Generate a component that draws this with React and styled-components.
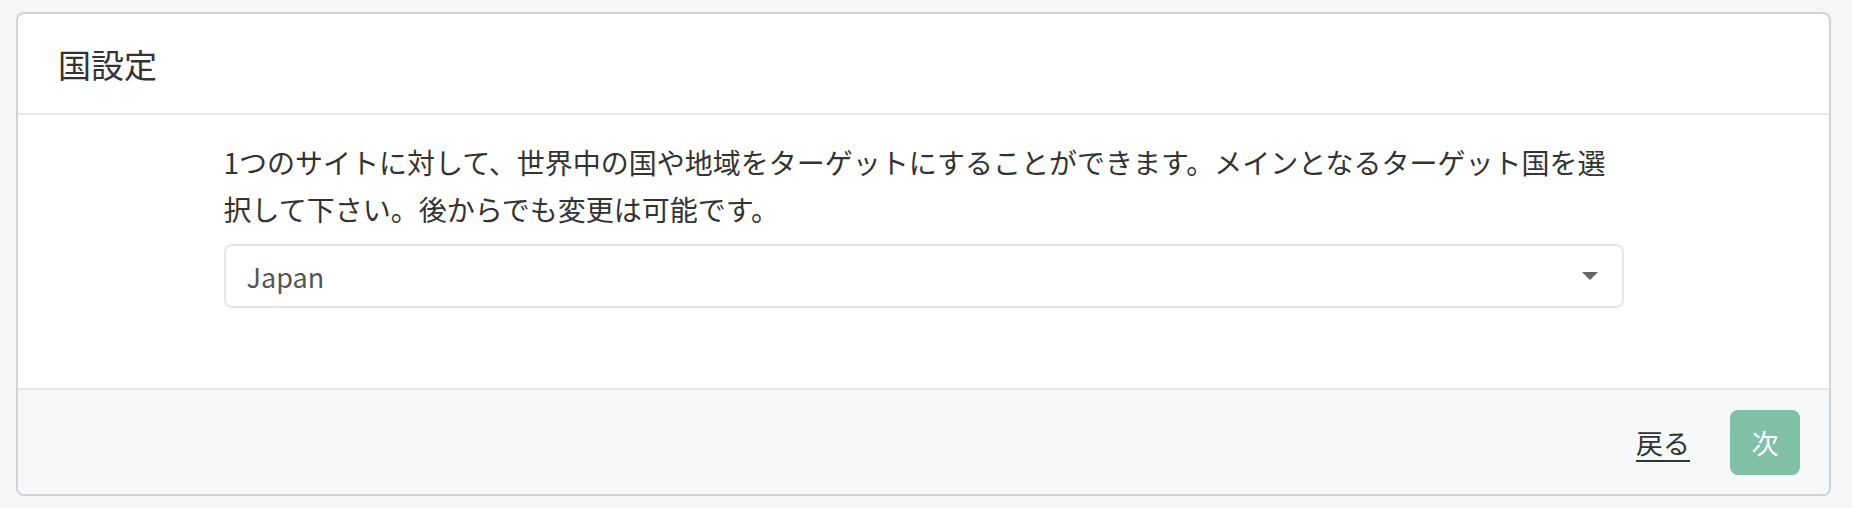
import React from "react";
import styled, { createGlobalStyle } from "styled-components";

const GlobalStyle = createGlobalStyle`
  html, body {
    margin: 0;
    padding: 0;
    background: #f6f6f6;
    font-family: "Noto Sans CJK JP", "Noto Sans", sans-serif;
    color: #333;
  }
  * { box-sizing: border-box; }
`;

const Page = styled.div`
  padding: 12px 21px 12px 16px;
`;

const Card = styled.section`
  background: #fff;
  border: 2px solid #d0d4d9;
  border-radius: 8px;
  overflow: hidden;
`;

const Header = styled.header`
  height: 101px;
  display: flex;
  align-items: center;
  padding: 0 40px;
  border-bottom: 2px solid #e8e8e8;
`;

const Title = styled.h2`
  margin: 0;
  font-size: 33px;
  font-weight: 400;
  color: #333;
`;

const Body = styled.div`
  height: 275px;
  padding: 24px 0 0;
  display: flex;
  justify-content: center;
  border-bottom: 2px solid #e6e6e6;
`;

const Column = styled.div`
  width: 1400px;
  display: flex;
  flex-direction: column;
  gap: 11px;
`;

const Description = styled.p`
  margin: 0;
  font-size: 28px;
  line-height: 1.68;
  color: #333;
`;

const SelectBox = styled.div`
  height: 64px;
  border: 2px solid #e6e6e6;
  border-radius: 8px;
  display: flex;
  align-items: center;
  justify-content: space-between;
  padding: 0 24px 0 21px;
  font-size: 27px;
  color: #555;
`;

const Caret = styled.svg`
  width: 16px;
  height: 8px;
  display: block;
`;

const Footer = styled.footer`
  height: 104px;
  background: #f7f8fa;
  display: flex;
  align-items: center;
  justify-content: flex-end;
  gap: 40px;
  padding: 0 29px 0 0;
`;

const BackLink = styled.a`
  font-size: 27px;
  color: #333;
  text-decoration: underline;
  text-underline-offset: 6px;
  text-decoration-thickness: 2px;
  cursor: pointer;
`;

const NextButton = styled.button`
  width: 70px;
  height: 65px;
  border: none;
  border-radius: 8px;
  background: #80c0a6;
  color: #fff;
  font-family: inherit;
  font-size: 27px;
  padding: 0;
  cursor: pointer;
`;

export default function App() {
  return (
    <>
      <GlobalStyle />
      <Page>
        <Card>
          <Header>
            <Title>国設定</Title>
          </Header>
          <Body>
            <Column>
              <Description>
                1つのサイトに対して、世界中の国や地域をターゲットにすることができます。メインとなるターゲット国を選択して下さい。後からでも変更は可能です。
              </Description>
              <SelectBox>
                <span>Japan</span>
                <Caret viewBox="0 0 16 8">
                  <path d="M0 0 L16 0 L8 8 Z" fill="#666" />
                </Caret>
              </SelectBox>
            </Column>
          </Body>
          <Footer>
            <BackLink>戻る</BackLink>
            <NextButton>次</NextButton>
          </Footer>
        </Card>
      </Page>
    </>
  );
}
